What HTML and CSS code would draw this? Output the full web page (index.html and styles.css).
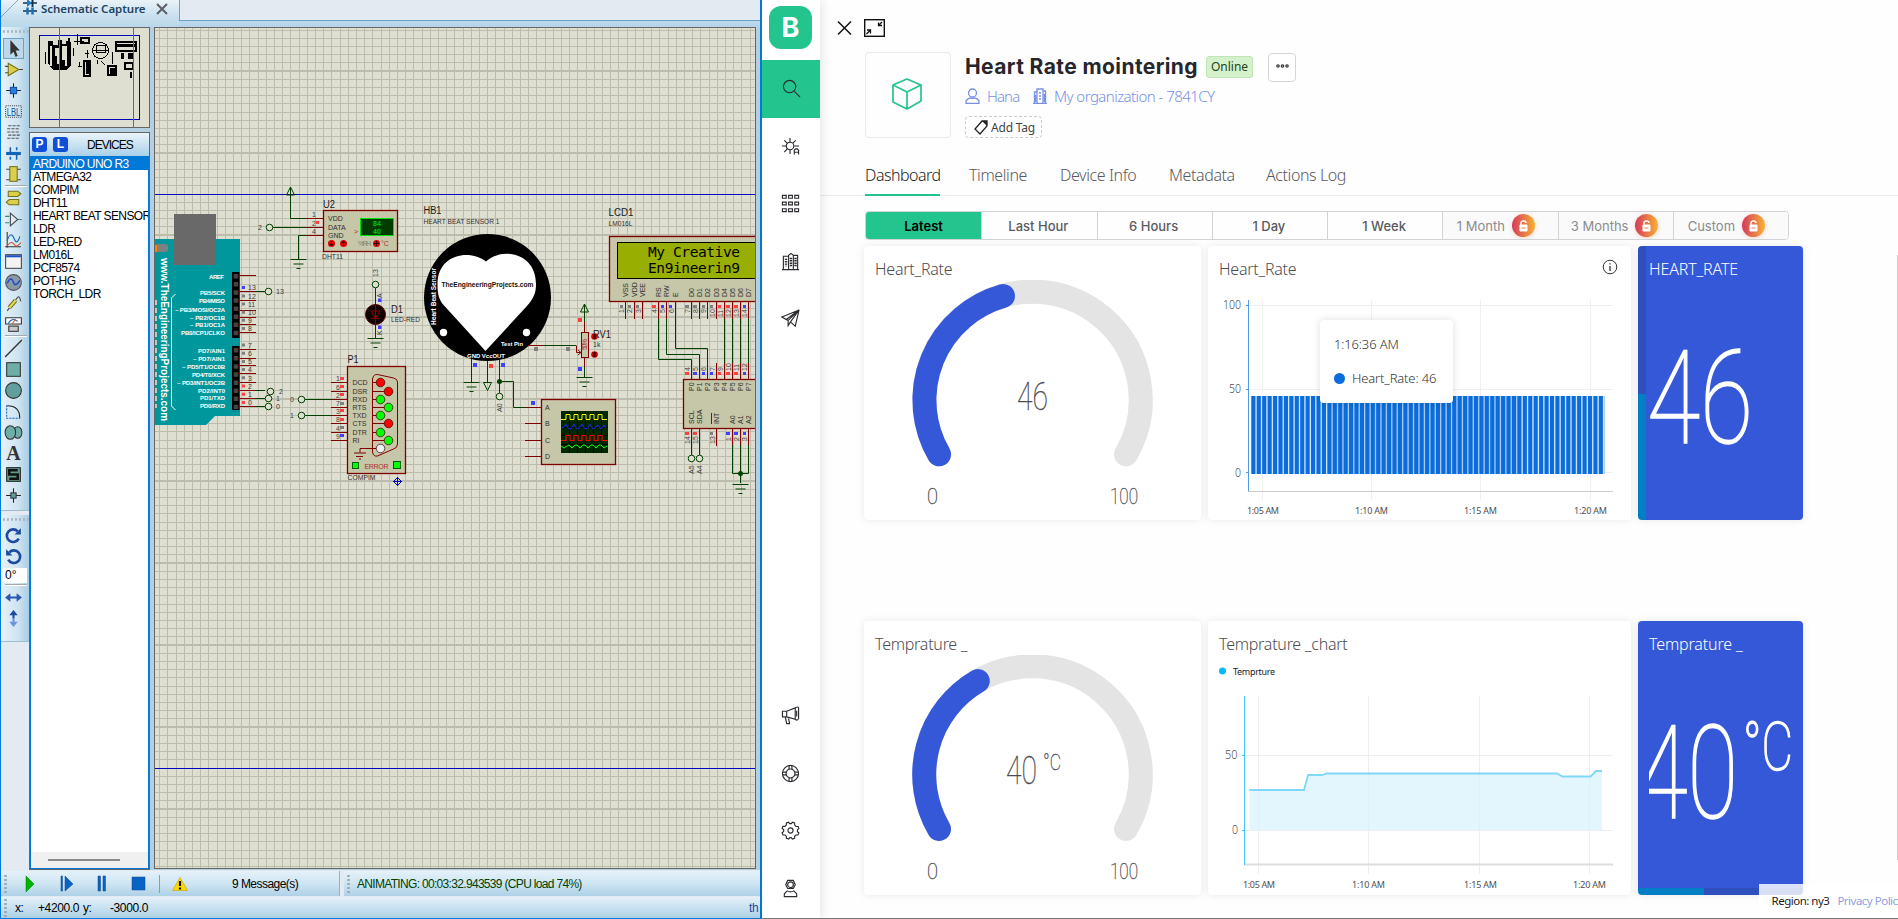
FILE: index.html
```html
<!DOCTYPE html>
<html lang="en">
<head>
<meta charset="utf-8">
<title>Schematic Capture and dashboard</title>
<link rel="stylesheet" href="styles.css">
</head>
<body>
<section class="capture">
  <header class="tabstrip">
    <div class="tab">
      <svg class="tab-slash" width="20" height="20"><path d="M0 19 19 0" stroke="#7aa7c4" fill="none"/></svg>
      <svg class="tab-icon" width="14" height="16" viewBox="0 0 14 16"><path d="M0 4h14M0 12h14" stroke="#12354f" stroke-width="1.400"/><path d="M4 0l5 4-5 4z" fill="#1c7fc4"/><path d="M9.500 0v8" stroke="#12354f" stroke-width="2"/><path d="M4.500 8.500v7M9.500 8.500v7" stroke="#1c6fb4" stroke-width="2.500"/></svg>
      <span class="tab-name">Schematic Capture</span>
      <svg width="12" height="12" viewBox="0 0 12 12"><path d="M1 1l10 10M11 1 1 11" stroke="#5b6066" stroke-width="2"/></svg>
    </div>
    <div class="tab-rest"></div>
  </header>
  <div class="workspace">
    <nav class="tools">
      <div class="tool-group">
        <i class="grip"></i>
        <b class="tool on"><svg viewBox="0 0 20 20"><path d="M7 2v14l3-3 2 5 2-1-2-5h4z" fill="#333"/></svg></b>
        <b class="tool"><svg viewBox="0 0 20 20"><path d="M2 7h4M2 13h4M14 10h5" stroke="#444"/><path d="M5 4l10 6-10 6z" fill="#d9cf4a" stroke="#77701c"/></svg></b>
        <b class="tool"><svg viewBox="0 0 20 20"><path d="M10 3v14M3 10h14" stroke="#222"/><rect x="7" y="7" width="6" height="6" fill="#2a7de0" stroke="#134e9a"/></svg></b>
        <b class="tool"><svg viewBox="0 0 20 20"><rect x="2.500" y="4.500" width="15" height="11" fill="none" stroke="#444" stroke-dasharray="1 1"/><text x="3.500" y="14" class="lbl" textLength="13" lengthAdjust="spacingAndGlyphs">LBL</text></svg></b>
        <b class="tool"><svg viewBox="0 0 20 20"><path d="M5 3.500h11M4 6.500h12M4 9.500h12M5 12.500h11M4 15.500h11" stroke="#555" stroke-dasharray="3 1"/></svg></b>
        <b class="tool"><svg viewBox="0 0 20 20"><path d="M3 10h14" stroke="#1263b8" stroke-width="3"/><path d="M7 4v6M13 10v6M7 13v3M13 4v3" stroke="#1263b8" stroke-width="1.500"/></svg></b>
        <b class="tool"><svg viewBox="0 0 20 20"><path d="M3 5h14M3 15h14" stroke="#444"/><rect x="6.500" y="2.500" width="7" height="14" fill="#d9cf4a" stroke="#77701c"/></svg></b>
        <i class="sep"></i>
        <b class="tool"><svg viewBox="0 0 20 20"><path d="M5 3h9l3 2.500-3 2.500H5zM15 11H6l-3 2.500 3 2.500h9z" fill="#d9cf4a" stroke="#77701c"/></svg></b>
        <b class="tool"><svg viewBox="0 0 20 20"><path d="M2 7h4M2 13h4M14 10h4" stroke="#2d8c86"/><path d="M7 4v12l7-6z" fill="#dfeaf1" stroke="#444"/></svg></b>
        <b class="tool"><svg viewBox="0 0 20 20"><path d="M4 2v15M2 16h15" stroke="#333"/><path d="M4 10c3-8 5-6 7-1s4 1 5-3" stroke="#1263b8" fill="none"/><path d="M4 15c3-4 5-4 7-1s4 0 6-2" stroke="#d4522a" fill="none"/></svg></b>
        <b class="tool"><svg viewBox="0 0 20 20"><rect x="2.500" y="3.500" width="15" height="13" fill="#f3f3f3" stroke="#444"/><path d="M3 5h14" stroke="#1c50c8" stroke-width="2"/></svg></b>
        <b class="tool"><svg viewBox="0 0 20 20"><circle cx="10" cy="10" r="7.500" fill="#8b98a8" stroke="#555"/><path d="M4 11c3-7 5-4 6-1s3 3 6-2" stroke="#1c50c8" stroke-width="1.500" fill="none"/></svg></b>
        <b class="tool"><svg viewBox="0 0 20 20"><path d="M4 17l3-4M12 7c3-6 4-3 5 1" stroke="#444" fill="none"/><path d="M6 14l6-7" stroke="#77701c" stroke-width="4"/><path d="M6 14l6-7" stroke="#e6dc52" stroke-width="2"/></svg></b>
        <b class="tool"><svg viewBox="0 0 20 20"><path d="M2.500 3.500h15v6h-15z" fill="#fff" stroke="#333"/><path d="M5 9c2-4 5-5 9-2" stroke="#1263b8" fill="none"/><path d="M9 9l3-4" stroke="#d4522a"/><rect x="5.500" y="11.500" width="9" height="5" fill="#c9c9c9" stroke="#333"/></svg></b>
        <i class="sep"></i>
        <b class="tool"><svg viewBox="0 0 20 20"><path d="M2 18 18 2" stroke="#333" stroke-width="1.300"/></svg></b>
        <b class="tool"><svg viewBox="0 0 20 20"><rect x="3.500" y="3.500" width="13" height="13" fill="#6fada9" stroke="#333"/></svg></b>
        <b class="tool"><svg viewBox="0 0 20 20"><circle cx="10" cy="10" r="7.500" fill="#5f9f9c" stroke="#333"/></svg></b>
        <b class="tool"><svg viewBox="0 0 20 20"><path d="M3.500 4v12.500H16" stroke="#1263b8" stroke-dasharray="2 1" fill="none"/><path d="M4 4.500c8 0 12 4 12 12" stroke="#222" fill="none"/></svg></b>
        <b class="tool"><svg viewBox="0 0 20 20"><ellipse cx="14" cy="10" rx="4" ry="5.500" fill="#6fada9" stroke="#333"/><ellipse cx="7" cy="10" rx="5" ry="6.500" fill="#6fada9" stroke="#333"/></svg></b>
        <b class="tool"><svg viewBox="0 0 20 20"><text x="3" y="16.500" class="glyph-a">A</text></svg></b>
        <b class="tool"><svg viewBox="0 0 20 20"><rect x="3.500" y="3.500" width="13" height="13" fill="#5f9f8c" stroke="#222"/><path d="M14 6H6v4h8v4H6" stroke="#111" stroke-width="2.400" fill="none"/></svg></b>
        <b class="tool"><svg viewBox="0 0 20 20"><path d="M10 3v14M3 10h14" stroke="#222"/><rect x="7.500" y="7.500" width="5" height="5" fill="#5f9f9c" stroke="#333"/></svg></b>
      </div>
      <div class="tool-group second">
        <i class="grip"></i>
        <b class="tool"><svg viewBox="0 0 20 20"><path d="M15 13a6 6 0 1 1-1-7" stroke="#1c4aa0" stroke-width="2.500" fill="none"/><path d="M17 3v6h-6z" fill="#1c4aa0"/></svg></b>
        <b class="tool"><svg viewBox="0 0 20 20"><path d="M5 13a6 6 0 1 0 1-7" stroke="#1c4aa0" stroke-width="2.500" fill="none"/><path d="M3 3v6h6z" fill="#1c4aa0"/></svg></b>
        <span class="angle">0°</span>
        <i class="sep"></i>
        <b class="tool"><svg viewBox="0 0 20 20"><path d="M2 10l5-4v3h6V6l5 4-5 4v-3H7v3z" fill="#2a56b0"/></svg></b>
        <b class="tool"><svg viewBox="0 0 20 20"><path d="M10 2l4 5h-3v3H9V7H6z" fill="#1c4aa0"/><path d="M10 18l4-5h-3v-3H9v3H6z" fill="#6d93da"/></svg></b>
      </div>
    </nav>
    <aside class="side">
      <div class="overview">
        <svg width="119" height="99" viewBox="30 28 119 99" shape-rendering="crispEdges">
          <rect x="39.500" y="35.500" width="100" height="84" fill="none" stroke="#0000b8"/>
          <path d="M48 41h5v4h5v-5h4v4h4v-6h4v4h1v23l-4 5H53l-5-7z" fill="#000"/>
          <path d="M50 46h2v20h-2zM55 48h4v16h-2v-8h-2zM62 46h5v20h-2v-6h-3zM64 38h4v3h-4z" fill="#dedfd0"/>
          <path d="M45 52v12M73 48v8M77 34v11M74 41h10M87 50v8M85 53h4M112 52v12M78 66h4M79 62v5" stroke="#000"/>
          <g fill="none" stroke="#000" stroke-width="2"><path d="M81 38h8v5h-8zM84 61h6v15h-6zM108 66h8v9h-8zM116 42h20v9h-20zM125 63h8v6h-8z"/></g>
          <path d="M86 61h4v13h-4zM110 68h6v6h-6zM121 53h3v6h4v-6h5v6h-12zM130 72h2v6h-2zM116 44h20v3h-20z" fill="#000"/>
          <circle cx="100.500" cy="50.500" r="8" fill="none" stroke="#000"/><path d="M92 50h17M96 45h9v7h-9zM97 60v4M101 61l4 4" stroke="#000" fill="none"/>
          <path d="M59.500 28v99M133.500 28v99" stroke="#00b400"/>
        </svg>
      </div>
      <div class="devices">
        <div class="devices-head"><b class="key">P</b><b class="key">L</b><span>DEVICES</span></div>
        <ul>
          <li class="picked">ARDUINO UNO R3</li><li>ATMEGA32</li><li>COMPIM</li><li>DHT11</li><li>HEART BEAT SENSOR</li><li>LDR</li><li>LED-RED</li><li>LM016L</li><li>PCF8574</li><li>POT-HG</li><li>TORCH_LDR</li>
        </ul>
        <div class="hscroll"><i></i></div>
      </div>
    </aside>
    <main class="sheet">
      <svg class="schematic" width="600" height="840" viewBox="155 28 600 840">
        <defs>
          <g id="gnd"><path d="M-8 0H8M-5 4.500H5M-2 9H2" stroke="#004000"/></g>
          <g id="pwr"><path d="M0 0v8" stroke="#004000"/><path d="M-4 8 0 0 4 8z" fill="none" stroke="#004000"/></g>
          <circle id="term" r="3.300" fill="#dedfd0" stroke="#004000"/>
        </defs>
        <g shape-rendering="crispEdges" stroke="#bcbcac" fill="none">
          <path d="M159.200 448H755" stroke-width="840" stroke-dasharray="1 7.200"/>
          <path d="M455 29.700V868" stroke-width="600" stroke-dasharray="1 7.200"/>
          <path d="M232.600 448H755" stroke-width="840" stroke-dasharray="1.600 80.400"/>
          <path d="M455 70V868" stroke-width="600" stroke-dasharray="2 80"/>
        </g>
        <path d="M155 194.500H755M155 768.500H755" stroke="#0000c0"/>

        <g class="board">
          <path d="M155 239h85v177h-25l-9 9h-51z" fill="#00979c"/>
          <path d="M155 300V408" stroke="#c4c4c4" stroke-width="4" stroke-dasharray="5 3"/>
          <rect x="174" y="214" width="42" height="51" fill="#696969"/>
          <rect x="155" y="244" width="13" height="8" rx="3" fill="#808080"/><rect x="155" y="245" width="2" height="7" fill="#ff8000"/>
          <text class="vert-name" transform="translate(160.500 258) rotate(90)" textLength="163" lengthAdjust="spacingAndGlyphs">www.TheEngineeringProjects.com</text>
          <path d="M175.500 294l-4 4v108l4 4" fill="none" stroke="#fff"/>
          <path d="M232 272h7.500v66H232zM232 346h7.500v64H232z" fill="#000"/>
          <path d="M236 274v63M236 348v61" stroke="#444" stroke-width="4.500" stroke-dasharray="4.500 3.600"/>
          <g class="silk">
            <text x="224" y="279" textLength="15">AREF</text><text x="225" y="295" textLength="25">PB5/SCK</text><text x="225" y="303" textLength="26">PB4/MISO</text><text x="225" y="312" textLength="50">~ PB3/MOSI/OC2A</text><text x="225" y="320" textLength="35">~ PB2/OC1B</text><text x="225" y="327" textLength="35">~ PB1/OC1A</text><text x="225" y="335" textLength="44">PB0/ICP1/CLKO</text>
            <text x="225" y="353" textLength="27">PD7/AIN1</text><text x="225" y="361" textLength="32">~ PD7/AIN1</text><text x="225" y="369" textLength="43">~ PD5/T1/OC0B</text><text x="225" y="377" textLength="33">PD4/T0/XCK</text><text x="225" y="385" textLength="48">~ PD3/INT1/OC2B</text><text x="225" y="393" textLength="27">PD2/INT0</text><text x="225" y="400" textLength="25">PD1/TXD</text><text x="225" y="408" textLength="25">PD0/RXD</text>
          </g>
          <path d="M237 275.500h19M237 291.500h19M237 300.500h19M237 310.500h19M237 317.500h19M237 324.500h19M237 332.500h19M237 349.500h19M237 358.500h19M237 365.500h19M237 373.500h19M237 382.500h19M237 390.500h19M237 398.500h19M237 406.500h19" stroke="#800000"/>
          <path d="M256 291.500h9M256 390.500h9M256 398.500h9M256 406.500h9" stroke="#004000"/>
          <use href="#term" x="268.500" y="291.500"/><use href="#term" x="270.500" y="391.500"/><use href="#term" x="268.500" y="398.500"/><use href="#term" x="268.500" y="406.500"/>
          <g class="pin"><text x="248" y="290">13</text><text x="248" y="299">12</text><text x="248" y="307">11</text><text x="248" y="315">10</text><text x="248" y="323">9</text><text x="248" y="331">8</text><text x="248" y="348">7</text><text x="248" y="356">6</text><text x="248" y="364">5</text><text x="248" y="372">4</text><text x="248" y="381">3</text><text x="248" y="389">2</text><text x="248" y="397">1</text><text x="248" y="405">0</text><text x="276" y="294">13</text><text x="279" y="394">2</text><text x="276" y="401">1</text><text x="276" y="409">0</text></g>
          <path d="M243.500 294.500v40" stroke="#808080" stroke-width="3" stroke-dasharray="3 5.100"/><path d="M243.500 343.500v36" stroke="#808080" stroke-width="3" stroke-dasharray="3 5.200"/>
          <path d="M243.500 384.500v20" stroke="#ff4040" stroke-width="3" stroke-dasharray="3 5.200"/><path d="M242 286h3v3h-3z" fill="#4040ff"/>
        </g>

        <g class="dht">
          <use href="#pwr" x="290.500" y="187"/><path d="M290.500 194v24.500H306M273 227.500h33M298.500 259v-23.500H306" fill="none" stroke="#004000"/>
          <path d="M306 218.500h17M306 227.500h17M306 235.500h17" stroke="#800000"/><use href="#gnd" x="298.500" y="259.500"/><use href="#term" x="269.500" y="227.500"/>
          <rect x="323.500" y="210.500" width="74" height="41" fill="#c6c6a8" stroke="#800000" stroke-width="1.300"/>
          <rect x="360.500" y="218.500" width="33" height="17" fill="#003c00" stroke="#00e600"/>
          <text x="373" y="226" class="led">84</text><text x="373" y="234" class="led">40</text>
          <g class="pin"><text x="258" y="230">2</text><text x="312" y="217">1</text><text x="312" y="226">2</text><text x="312" y="234">4</text></g><path d="M316 221h3v3h-3z" fill="#ff4040"/>
          <g class="part"><text x="328" y="221">VDD</text><text x="328" y="230">DATA</text><text x="328" y="238">GND</text></g>
          <g fill="#e00000"><circle cx="331.500" cy="243.500" r="3.500"/><circle cx="343.500" cy="243.500" r="3.500"/><circle cx="376.500" cy="243.500" r="3.500"/></g><path d="M331.500 241v5M343.500 241v5M374 243.500h5M376.500 241v5M330 244l1.500 2 1.500-2M342 243l1.500-2 1.500 2" stroke="#300" fill="none"/>
          <text x="358" y="246" class="part dim" textLength="13">%RH</text><text x="381" y="246" class="part red">°C</text><text x="354" y="234" class="part red">&gt;</text>
          <text x="323" y="208" class="ref" textLength="12" lengthAdjust="spacingAndGlyphs">U2</text><text x="322" y="259" class="val" textLength="21" lengthAdjust="spacingAndGlyphs">DHT11</text>
        </g>

        <g class="diode">
          <path d="M375.500 288v10M375.500 330v9" stroke="#004000"/><path d="M375.500 298v32" stroke="#800000"/><use href="#term" x="375.500" y="284.500"/><use href="#gnd" x="375.500" y="338.500"/>
          <circle cx="375.500" cy="314.500" r="10" fill="#100000" stroke="#500000"/><path d="M371 311h9l-4.500 7zM371 318.500h9M375.500 305v19" fill="none" stroke="#900000"/>
          <text class="pin" transform="translate(378 277) rotate(-90)">13</text><text class="pin" transform="translate(382 298) rotate(-90)">A</text><text class="pin" transform="translate(382 335) rotate(-90)">K</text>
          <path d="M378 298.500h3.500v3.500H378zM378 325.500h3.500v3.500H378z" fill="#4040ff"/>
          <text x="391" y="313" class="ref" textLength="12" lengthAdjust="spacingAndGlyphs">D1</text><text x="391" y="322" class="val" textLength="29" lengthAdjust="spacingAndGlyphs">LED-RED</text>
        </g>

        <g class="compim">
          <path d="M305 399.500h27M305 415.500h27" stroke="#004000"/><use href="#term" x="301.500" y="399.500"/><use href="#term" x="301.500" y="415.500"/>
          <path d="M331 382.500h17M331 391.500h17M331 399.500h17M331 407.500h17M331 415.500h17M331 423.500h17M331 432.500h17M331 440.500h17" stroke="#800000"/>
          <rect x="347.500" y="366.500" width="58" height="107" fill="#c6c6a8" stroke="#800000" stroke-width="1.300"/>
          <path d="M372.500 379q1-5 5-4.500l16 3.500q4 1 4 4v62q0 4-4 5l-16 7q-4 1-5-4zM372.500 382.500h6M372.500 391.500h14M372.500 399.500h6M372.500 407.500h14M372.500 415.500h6M372.500 423.500h14M372.500 432.500h6M372.500 440.500h14M378 448.500h-18v4M354 453h12M356 456.500h7M359 459h2" fill="none" stroke="#800000"/>
          <g stroke="#300" stroke-width=".7"><g fill="#f00"><circle cx="380.500" cy="382.500" r="4.300"/><circle cx="388.500" cy="391.500" r="4.300"/><circle cx="388.500" cy="423.500" r="4.300"/></g><g fill="#0f0"><circle cx="380.500" cy="399.500" r="4.300"/><circle cx="388.500" cy="407.500" r="4.300"/><circle cx="380.500" cy="415.500" r="4.300"/><circle cx="380.500" cy="432.500" r="4.300"/><circle cx="388.500" cy="440.500" r="4.300"/></g><circle cx="380.500" cy="448.500" r="4.300" fill="#eee"/></g>
          <g class="part"><text x="352.500" y="385">DCD</text><text x="352.500" y="394">DSR</text><text x="352.500" y="402">RXD</text><text x="352.500" y="410">RTS</text><text x="352.500" y="418">TXD</text><text x="352.500" y="426">CTS</text><text x="352.500" y="435">DTR</text><text x="352.500" y="443">RI</text></g>
          <g class="pin"><text x="336" y="381">1</text><text x="336" y="390">6</text><text x="336" y="398">2</text><text x="336" y="406">7</text><text x="336" y="414">3</text><text x="336" y="422">8</text><text x="336" y="431">4</text><text x="336" y="439">9</text><text x="290" y="402">0</text><text x="290" y="418">1</text></g>
          <path d="M340 377h4v3h-4zM340 385h4v3h-4zM340 393h4v3h-4zM340 409h4v3h-4zM340 418h4v3h-4z" fill="#ff4040"/><path d="M340 402h4v3h-4zM340 426h4v3h-4z" fill="#808080"/><path d="M340 434h4v3h-4z" fill="#4040ff"/>
          <g fill="#0f0" stroke="#006000"><rect x="352.500" y="462.500" width="6" height="6"/><rect x="393.500" y="461.500" width="7" height="7"/></g>
          <text x="364.500" y="469" class="part red" textLength="24">ERROR</text>
          <text x="347.500" y="363" class="ref" textLength="11" lengthAdjust="spacingAndGlyphs">P1</text><text x="347.500" y="480" class="val" textLength="28" lengthAdjust="spacingAndGlyphs">COMPIM</text>
          <path d="M397.500 477v9M393 481.500h9M397.500 477.500l4 4-4 4-4-4z" fill="none" stroke="#0000c0"/>
        </g>

        <g class="heart">
          <path d="M471.500 360v22M487.500 360v22M499.500 360v33M499.500 381.500h14v26H525" fill="none" stroke="#004000"/><path d="M471.500 358v15M487.500 358v15M499.500 358v15M525 407.500h16M525 423.500h16M525 440.500h16M525 456.500h16" stroke="#800000"/>
          <use href="#gnd" x="471.500" y="382.500"/><path d="M483.500 382.500h8l-4 8z" fill="none" stroke="#004000"/><circle cx="499.500" cy="381.500" r="2.500" fill="#004000"/><use href="#term" x="499.500" y="396.500"/>
          <circle cx="487.500" cy="297.500" r="63.500" fill="#000"/>
          <path d="M486 261.500C471 249 437 253 437.500 285c0 8 1 15 7 21L485.500 351l41-44.500c7-8 9.500-13 9.500-22.500C536 252 501 247 486 261.500z" fill="#fff"/>
          <circle cx="443.500" cy="332.500" r="3.700" fill="#fff"/><circle cx="526.500" cy="332.500" r="3.700" fill="#fff"/>
          <text x="441.500" y="286.500" class="site" textLength="92" lengthAdjust="spacingAndGlyphs">TheEngineeringProjects.com</text>
          <text class="white-lbl" transform="translate(436 325) rotate(-90)" textLength="57" lengthAdjust="spacingAndGlyphs">Heart Beat Sensor</text>
          <text x="501" y="346" class="white-lbl sm" textLength="22" lengthAdjust="spacingAndGlyphs">Test Pin</text><text x="467" y="358" class="white-lbl sm" textLength="38" lengthAdjust="spacingAndGlyphs">GND VccOUT</text>
          <path d="M473 363h4v4h-4zM501 363h4v4h-4zM531 401h4v4h-4zM578 367h4v4h-4z" fill="#4040ff"/><path d="M489 364h4v4h-4zM578 318h4v4h-4z" fill="#ff4040"/><path d="M534 347h4v4h-4zM566 347h4v4h-4z" fill="#808080"/>
          <text class="pin" transform="translate(502 412) rotate(-90)">A0</text>
          <text x="423.500" y="214" class="ref" textLength="18" lengthAdjust="spacingAndGlyphs">HB1</text><text x="423.500" y="224" class="val" textLength="76" lengthAdjust="spacingAndGlyphs">HEART BEAT SENSOR 1</text>
        </g>

        <g class="pot">
          <path d="M528 345.500h16M576.500 345.500v7h4M584.500 321v12M584.500 357v10" fill="none" stroke="#800000"/><path d="M544 345.500h32M584.500 310v12M584.500 367v10" stroke="#004000"/>
          <use href="#pwr" x="584.500" y="304"/><use href="#gnd" x="584.500" y="377.500"/>
          <rect x="581.500" y="332.500" width="7" height="25" fill="#c6c6a8" stroke="#800000"/><text class="part red" transform="translate(587 350) rotate(-90)" textLength="11">50%</text>
          <path d="M578 350l3 2.500-3 2.500" fill="none" stroke="#800000"/><text x="593" y="338" class="ref" textLength="18" lengthAdjust="spacingAndGlyphs">RV1</text><text x="593" y="347" class="val">1k</text>
          <circle cx="594.500" cy="336.500" r="3.300" fill="#d00000"/><circle cx="594.500" cy="354.500" r="3.300" fill="#d00000"/><path d="M594.500 334v5M594.500 352v5" stroke="#300" stroke-width="2"/>
        </g>

        <g class="scope">
          <rect x="541.500" y="399.500" width="74" height="65" fill="#c6c6a8" stroke="#800000" stroke-width="1.300"/>
          <rect x="561" y="411" width="47" height="42" fill="#002800"/>
          <path d="M569.500 411v42M577.500 411v42M585.500 411v42M593.500 411v42M601.500 411v42M561 419.500h47M561 427.500h47M561 435.500h47M561 444.500h47" stroke="#000"/>
          <path d="M561 419.500h5v-5h4v5h4v-5h4v5h4v-5h4v5h4v-5h4v5h4v-5h4v5h5" fill="none" stroke="#ff0"/>
          <path d="M561 440.500h5v-5h4v5h4v-5h4v5h4v-5h4v5h4v-5h4v5h4v-5h4v5h5" fill="none" stroke="#f00" stroke-width="1.200"/>
          <path d="M561 428l3-1 2-3 2 4 3 1 3-5 3 5 3-2 2-3 3 5 3-1 2-4 3 5 3-2 2-2 3 4 3-4 2 3" fill="none" stroke="#22f"/>
          <path d="M561 446l3 2 3-2 2-1 3 3 3-3 2 0 3 3 3-3 2 0 3 3 3-3 2 0 3 3 3-3 2 0 3 3 3-2" fill="none" stroke="#0f0"/>
          <g class="part"><text x="545" y="410">A</text><text x="545" y="426">B</text><text x="545" y="443">C</text><text x="545" y="459">D</text></g>
        </g>

        <g class="lcd">
          <rect x="609.500" y="236.500" width="160" height="65" fill="#c6c6a8" stroke="#800000" stroke-width="1.300"/>
          <rect x="617.500" y="242.500" width="150" height="36" fill="#98ae00" stroke="#000"/>
          <text x="648" y="256.500" class="lcd-text" textLength="92">My Creative</text><text x="648" y="272.500" class="lcd-text" textLength="92">En9ineerin9</text>
          <path d="M625.500 302v17M634.500 302v17M642.500 302v17M658.500 302v17M666.500 302v17M675.500 302v17M691.500 302v17M699.500 302v17M707.500 302v17M716.500 302v17M724.500 302v17M732.500 302v17M740.500 302v17M748.500 302v17" stroke="#800000"/>
          <path d="M658.500 319v40.500h33V364M666.500 319v35.500h33V364M675.500 319v29.500h32V364M724.500 319v46M732.500 319v46M740.500 319v46M748.500 319v46" fill="none" stroke="#004000"/>
          <g class="part"><text transform="translate(628 297) rotate(-90)">VSS</text><text transform="translate(637 297) rotate(-90)">VDD</text><text transform="translate(645 297) rotate(-90)">VEE</text><text transform="translate(661 297) rotate(-90)">RS</text><text transform="translate(669 297) rotate(-90)">RW</text><text transform="translate(678 297) rotate(-90)">E</text><text transform="translate(694 297) rotate(-90)">D0</text><text transform="translate(702 297) rotate(-90)">D1</text><text transform="translate(710 297) rotate(-90)">D2</text><text transform="translate(719 297) rotate(-90)">D3</text><text transform="translate(727 297) rotate(-90)">D4</text><text transform="translate(735 297) rotate(-90)">D5</text><text transform="translate(743 297) rotate(-90)">D6</text><text transform="translate(751 297) rotate(-90)">D7</text></g>
          <g class="pin"><text transform="translate(624 313) rotate(-90)">1</text><text transform="translate(632 313) rotate(-90)">2</text><text transform="translate(641 313) rotate(-90)">3</text><text transform="translate(657 313) rotate(-90)">4</text><text transform="translate(665 313) rotate(-90)">5</text><text transform="translate(674 313) rotate(-90)">6</text><text transform="translate(690 313) rotate(-90)">7</text><text transform="translate(698 313) rotate(-90)">8</text><text transform="translate(706 313) rotate(-90)">9</text><text transform="translate(715 317) rotate(-90)">10</text><text transform="translate(723 317) rotate(-90)">11</text><text transform="translate(731 317) rotate(-90)">12</text><text transform="translate(739 317) rotate(-90)">13</text><text transform="translate(747 317) rotate(-90)">14</text></g>
          <path d="M620 305h3v3h-3zM628 305h3v3h-3zM636 305h3v3h-3zM685 305h4v3h-4zM693 305h4v3h-4zM702 305h3v3h-3zM710 305h3v3h-3z" fill="#808080"/><path d="M652 305h4v3h-4zM718 305h3v3h-3zM726 305h4v3h-4zM734 305h4v3h-4z" fill="#ff4040"/><path d="M661 305h3v3h-3zM669 305h3v3h-3zM743 305h3v3h-3z" fill="#4040ff"/>
          <text x="608.500" y="216" class="ref" textLength="25" lengthAdjust="spacingAndGlyphs">LCD1</text><text x="608.500" y="226" class="val" textLength="24" lengthAdjust="spacingAndGlyphs">LM016L</text>
        </g>

        <g class="expander">
          <path d="M691.500 363v16M699.500 363v16M707.500 363v16M716.500 363v16M724.500 363v16M732.500 363v16M740.500 363v16M748.500 363v16M691.500 429v16M699.500 429v16M716.500 429v17M732.500 429v16M740.500 429v16M748.500 429v16" stroke="#800000"/>
          <rect x="683.500" y="379.500" width="90" height="49" fill="#c6c6a8" stroke="#800000" stroke-width="1.300"/>
          <path d="M691.500 445v10M699.500 445v10M732.500 445v28.500h16V445M740.500 445v38" fill="none" stroke="#004000"/><circle cx="740.500" cy="473.500" r="2.500" fill="#004000"/><use href="#gnd" x="740.500" y="484.500"/><use href="#term" x="691.500" y="458.500"/><use href="#term" x="699.500" y="458.500"/>
          <g class="part"><text transform="translate(694 391) rotate(-90)">P0</text><text transform="translate(702 391) rotate(-90)">P1</text><text transform="translate(710 391) rotate(-90)">P2</text><text transform="translate(719 391) rotate(-90)">P3</text><text transform="translate(727 391) rotate(-90)">P4</text><text transform="translate(735 391) rotate(-90)">P5</text><text transform="translate(743 391) rotate(-90)">P6</text><text transform="translate(751 391) rotate(-90)">P7</text><text transform="translate(694 424) rotate(-90)">SCL</text><text transform="translate(702 424) rotate(-90)">SDA</text><text transform="translate(719 424) rotate(-90)">INT</text><text transform="translate(735 424) rotate(-90)">A0</text><text transform="translate(743 424) rotate(-90)">A1</text><text transform="translate(751 424) rotate(-90)">A2</text></g><path d="M711.500 413v11" stroke="#333"/>
          <g class="pin"><text transform="translate(690 371) rotate(-90)">4</text><text transform="translate(698 371) rotate(-90)">5</text><text transform="translate(706 371) rotate(-90)">6</text><text transform="translate(715 371) rotate(-90)">7</text><text transform="translate(723 371) rotate(-90)">9</text><text transform="translate(731 371) rotate(-90)">10</text><text transform="translate(739 371) rotate(-90)">11</text><text transform="translate(747 371) rotate(-90)">12</text><text transform="translate(690 444) rotate(-90)">14</text><text transform="translate(698 444) rotate(-90)">15</text><text transform="translate(715 444) rotate(-90)">13</text><text transform="translate(731 441) rotate(-90)">1</text><text transform="translate(739 441) rotate(-90)">2</text><text transform="translate(747 441) rotate(-90)">3</text><text transform="translate(694 474) rotate(-90)">A5</text><text transform="translate(702 474) rotate(-90)">A4</text></g>
          <path d="M685 372h4v3h-4zM718 372h3v3h-3zM726 372h4v3h-4zM734 372h4v3h-4zM685 432h4v3h-4zM693 432h4v3h-4z" fill="#ff4040"/><path d="M693 372h4v3h-4zM702 372h3v3h-3zM710 372h3v3h-3zM743 372h3v3h-3zM726 432h4v3h-4zM734 432h4v3h-4zM743 432h3v3h-3z" fill="#4040ff"/><path d="M710 432h3v3h-3z" fill="#808080"/>
        </g>
      </svg>
    </main>
  </div>
  <div class="simbar">
    <div class="controls"><i class="vgrip"></i>
      <svg width="150" height="20" viewBox="20 874 150 20"><path d="M26 876l8 8-8 8z" fill="#00b400" stroke="#008000" stroke-width=".5"/><g fill="#0a62c4" stroke="#084a96" stroke-width=".5"><path d="M61 876h1.500v15H61zM65 876l8 8-8 7zM98 876h2.500v15H98zM103 876h2.500v15H103zM132 877h13v13h-13z"/></g><path d="M159.500 875v18" stroke="#999"/></svg>
      <svg width="16" height="14" viewBox="0 0 16 14"><path d="M8 .5 15.500 13.500H.5z" fill="#ffd800" stroke="#c9a000" stroke-width=".6"/><path d="M8 4v5M8 10.500v2" stroke="#111" stroke-width="2.200"/></svg>
      <span class="messages">9 Message(s)</span>
    </div>
    <div class="anim"><i class="vgrip"></i><span>ANIMATING: 00:03:32.943539 (CPU load 74%)</span></div>
  </div>
  <footer class="coords"><i class="vgrip"></i><span class="cx">x:</span><span class="cv">+4200.0</span><span class="cy">y:</span><span class="cv2">-3000.0</span><span class="unit">th</span></footer>
</section>

<section class="dash">
  <nav class="rail">
    <div class="logo">B</div>
    <a class="rail-item active"><svg viewBox="0 0 20 20"><circle cx="8" cy="8" r="6.500"/><path d="M13 13l6 6"/></svg></a>
    <a class="rail-item"><svg viewBox="0 0 20 20"><circle cx="9.500" cy="9.500" r="4"/><path d="M9.500 1v4.500M1 9.500h4.500M14 9.500h5M3.500 3.500l3 3M15.500 3.500l-3 3M3.500 16l3-3.500M9.500 14v4M14 18.500v-4.500l1.500-1.500h1.500l1.500 1.500v4.500M14 16h4.500"/></svg></a>
    <a class="rail-item"><svg viewBox="0 0 20 20"><path d="M1.500 1.500h4v3h-4zM8 1.500h4v3H8zM14.500 1.500h4v3h-4zM1.500 8.500h4v3h-4zM8 8.500h4v3H8zM14.500 8.500h4v3h-4zM1.500 15.500h4v3h-4zM8 15.500h4v3H8zM14.500 15.500h4v3h-4z"/></svg></a>
    <a class="rail-item"><svg viewBox="0 0 20 20"><path d="M1 18.500h18M2.500 18V4.500H8M8 18V3.500L10.500 1.500 13 3.500V18M13 3.500h4.500V18"/><path d="M5.300 7v8M10.500 6v9M15.300 6v9" stroke-width="2.500" stroke-dasharray="1.500 1"/></svg></a>
    <a class="rail-item"><svg viewBox="0 0 20 20"><path d="M19 1 1 8.500l4.500 2.500L19 1 7.500 12v5.500l2.500-4L19 1l-4 17-5-4.500M5.500 11l2 1"/></svg></a>
    <span class="rail-gap"></span>
    <a class="rail-item"><svg viewBox="0 0 20 20"><path d="M1.500 5.500H6l9-3.500v12l-9-2.500H1.500zM6 5.500v6M4.500 11.500l1.500 7h3l-1-5.500M15 2q3-2 3.500 0v11q-1 3-3.500 1M16.500 5v6"/></svg></a>
    <a class="rail-item"><svg viewBox="0 0 20 20"><circle cx="10" cy="10" r="8.500"/><circle cx="10" cy="10" r="4.700"/><path d="M8.500 1.500v4M11.500 1.500v4M8.500 14.500v4M11.500 14.500v4M1.500 8.500h4M1.500 11.500h4M14.500 8.500h4M14.500 11.500h4"/></svg></a>
    <a class="rail-item"><svg viewBox="0 0 20 20"><circle cx="10" cy="10" r="2.700"/><path d="M8 1.200l1 1.600h2l1-1.600 2.300.9.100 2.200 1.400 1.400 2.200.1.800 2.200-1.500 1.300v1.900l1.500 1.200-.9 2.200-2.100.1-1.400 1.400-.1 2.200-2.300.8-1.300-1.600H9.300l-1.300 1.600-2.300-.8-.1-2.200-1.400-1.400-2.200-.1-.8-2.200 1.600-1.300V9L1.200 7.900 2 5.700l2.200-.1 1.400-1.400.1-2.200z"/></svg></a>
    <a class="rail-item"><svg viewBox="0 0 20 20"><circle cx="10" cy="6" r="3"/><path d="M7 1.500h6L15 6l-2 4H7L5 6zM3.500 18.500v-3l3-3q3.500 2 7 0l3 3v3z"/></svg></a>
  </nav>
  <main class="page">
    <div class="page-tools">
      <svg width="15" height="16" viewBox="0 0 15 16"><path d="M1 1.500l13 13M14 1.500l-13 13" stroke="#111" stroke-width="1.500"/></svg>
      <svg width="21" height="18" viewBox="0 0 21 18"><rect x=".7" y=".7" width="19.600" height="16.600" fill="none" stroke="#111" stroke-width="1.400"/><path d="M18 3l-3 3M14.500 3.500v3H18M2.500 15l3.500-3.500M3 11h3.500v3.500" fill="none" stroke="#111" stroke-width="1.300"/></svg>
    </div>
    <header class="device">
      <div class="thumb"><svg width="30" height="32" viewBox="0 0 30 32"><path d="M15 1 29 7v16L15 31 1 24V7zM1 7l14 7 14-7M15 14v17" fill="none" stroke="#23c48e" stroke-width="1.700" stroke-linejoin="round"/></svg></div>
      <div class="device-info">
        <div class="name-row"><h1>Heart Rate mointering</h1><span class="online">Online</span><button class="more"><svg width="13" height="4" viewBox="0 0 13 4"><g fill="none" stroke="#333" stroke-width="1.200"><circle cx="2" cy="2" r="1.200"/><circle cx="6.500" cy="2" r="1.200"/><circle cx="11" cy="2" r="1.200"/></g></svg></button></div>
        <div class="owner-row">
          <svg width="15" height="16" viewBox="0 0 15 16"><circle cx="7.500" cy="5" r="4"/><path d="M1 15.300v-2.500q1.500-2.500 4.500-3 2 1 4 0 3 .5 4.500 3v2.500z"/></svg><span class="owner">Hana</span>
          <svg class="org-icon" width="14" height="16" viewBox="0 0 14 16"><path d="M0 15.300h14M1.500 15V4H4M4 15V1h6v14M10 3h2.500v12M6 5h2M6 8h2M6 11h2M2.500 7v7M11.500 6v8"/></svg><span class="org">My organization - 7841CY</span>
        </div>
        <button class="add-tag"><svg width="14" height="15" viewBox="0 0 14 15"><path d="M8 1h5v5l-7 8-5-5z" fill="none" stroke="#222" stroke-width="1.300"/><path d="M8 1h5v5z" fill="#222"/></svg><span>Add Tag</span></button>
      </div>
    </header>
    <nav class="tabs"><a class="current t1">Dashboard</a><a class="t2">Timeline</a><a class="t3">Device Info</a><a class="t4">Metadata</a><a class="t5">Actions Log</a></nav>
    <div class="ranges">
      <span class="live">Latest</span><span>Last Hour</span><span>6 Hours</span><span>1 Day</span><span>1 Week</span>
      <span class="locked shift">1 Month<i><svg width="9" height="12" viewBox="0 0 9 12"><path d="M2 5V3q0-2 2.500-2T7 3" fill="none" stroke="#fff" stroke-width="1.400"/><path d="M1 5h7v6H1z" fill="#fff" stroke="#fff"/><path d="M2.500 8h4" stroke="#e67d4a"/></svg></i></span>
      <span class="locked">3 Months<i><svg width="9" height="12" viewBox="0 0 9 12"><path d="M2 5V3q0-2 2.500-2T7 3" fill="none" stroke="#fff" stroke-width="1.400"/><path d="M1 5h7v6H1z" fill="#fff" stroke="#fff"/><path d="M2.500 8h4" stroke="#e67d4a"/></svg></i></span>
      <span class="locked shift">Custom<i><svg width="9" height="12" viewBox="0 0 9 12"><path d="M2 5V3q0-2 2.500-2T7 3" fill="none" stroke="#fff" stroke-width="1.400"/><path d="M1 5h7v6H1z" fill="#fff" stroke="#fff"/><path d="M2.500 8h4" stroke="#e67d4a"/></svg></i></span>
    </div>
    <div class="grid">
      <article class="card">
        <h2><span>Heart_Rate</span></h2>
        <svg width="337" height="240" viewBox="864 281 337 240">
          <g fill="none" stroke-width="24" stroke-linecap="round"><path d="M939 455.300A108.200 108.200 0 1 1 1126 455.300" stroke="#e4e4e4"/><path d="M939 455.300A108.200 108.200 0 0 1 1003 297" stroke="#3558d8"/></g>
          <g class="num"><text x="1017" y="411" font-size="39" textLength="31" lengthAdjust="spacingAndGlyphs">46</text><text x="927" y="505" font-size="22.500" textLength="11" lengthAdjust="spacingAndGlyphs">0</text><text x="1110" y="505" font-size="22.500" textLength="28" lengthAdjust="spacingAndGlyphs">100</text></g>
        </svg>
      </article>
      <article class="card">
        <h2><span>Heart_Rate</span><svg width="16" height="16" viewBox="0 0 16 16"><circle cx="8" cy="8" r="6.800" fill="none" stroke="#333"/><path d="M8 4.300v1.200M8 7v5" stroke="#333" stroke-width="1.300"/></svg></h2>
        <svg width="423" height="240" viewBox="1208 281 423 240">
          <path d="M1248 306.500h365M1248 390.500h365M1248 473.500h365M1262.500 301v200M1371.500 301v200M1480.500 301v200M1590.500 301v200" stroke="#f0f0f0"/>
          <path d="M1248 492.500h365" stroke="#ccc"/><path d="M1251.300 436H1604.500" stroke="#d3e5f8" stroke-width="78"/><path d="M1330 436h190" stroke="#a9c9ee" stroke-width="78"/><path d="M1251.300 436H1604.500" stroke="#0a6ddb" stroke-width="78" stroke-dasharray="4.100 1.330"/>
          <path d="M1248.500 301v191M1246 306.500h2M1246 390.500h2M1246 473.500h2" stroke="#4e9be6"/>
          <g class="axis"><text x="1223" y="310" textLength="18" lengthAdjust="spacingAndGlyphs">100</text><text x="1229" y="394" textLength="12" lengthAdjust="spacingAndGlyphs">50</text><text x="1235" y="478" textLength="6" lengthAdjust="spacingAndGlyphs">0</text></g>
          <g class="tick"><text x="1247" y="514.500" textLength="32">1:05 AM</text><text x="1355" y="514.500" textLength="33">1:10 AM</text><text x="1464" y="514.500" textLength="33">1:15 AM</text><text x="1574" y="514.500" textLength="33">1:20 AM</text></g>
        </svg>
        <div class="tip"><span>1:16:36 AM</span><span class="tip-row"><i></i>Heart_Rate: 46</span></div>
      </article>
      <article class="card solid level-v">
        <h2><span>HEART_RATE</span></h2>
        <svg width="166" height="240" viewBox="1638 281 166 240"><g class="num white"><text x="1647" y="443.500" font-size="129" textLength="106" lengthAdjust="spacingAndGlyphs">46</text></g></svg>
      </article>
      <article class="card">
        <h2><span>Temprature _</span></h2>
        <svg width="337" height="240" viewBox="864 656 337 240">
          <g fill="none" stroke-width="24" stroke-linecap="round"><path d="M939 830A108.200 108.200 0 1 1 1126 830" stroke="#e4e4e4"/><path d="M939 830A108.200 108.200 0 0 1 977.800 682" stroke="#3558d8"/></g>
          <g class="num"><text x="1006" y="785" font-size="39" textLength="31" lengthAdjust="spacingAndGlyphs">40</text><text x="1043" y="771" font-size="22.500" textLength="18" lengthAdjust="spacingAndGlyphs">°C</text><text x="927" y="880" font-size="22.500" textLength="11" lengthAdjust="spacingAndGlyphs">0</text><text x="1110" y="880" font-size="22.500" textLength="28" lengthAdjust="spacingAndGlyphs">100</text></g>
        </svg>
      </article>
      <article class="card">
        <h2><span>Temprature _chart</span></h2>
        <svg width="423" height="240" viewBox="1208 656 423 240">
          <circle cx="1222.500" cy="672" r="3.500" fill="#0bf"/><text x="1233" y="676" class="tick dark" textLength="42">Temprture</text>
          <path d="M1244 756.500h369M1244 831.500h369M1258.500 697v178M1368.500 697v178M1479.500 697v178M1589.500 697v178" stroke="#eee"/>
          <path d="M1244 865.500h369" stroke="#ddd" stroke-width="2"/>
          <path d="M1249.500 831V791H1304l4-15h14l5-1.500h230l5.500 3h28l5.500-5.500h6v59z" fill="#d7f2fd" opacity=".7"/>
          <path d="M1249.500 791H1304l4-15h14l5-1.500h230l5.500 3h28l5.500-5.500h6" fill="none" stroke="#7fd8f8" stroke-width="1.800"/>
          <path d="M1244.500 697v169M1242 756.500h3M1242 831.500h3" stroke="#45c8f5"/>
          <g class="axis"><text x="1225" y="760" textLength="12.500" lengthAdjust="spacingAndGlyphs">50</text><text x="1232" y="835" textLength="6" lengthAdjust="spacingAndGlyphs">0</text></g>
          <g class="tick"><text x="1243" y="888.500" textLength="32">1:05 AM</text><text x="1352" y="888.500" textLength="33">1:10 AM</text><text x="1464" y="888.500" textLength="33">1:15 AM</text><text x="1573" y="888.500" textLength="33">1:20 AM</text></g>
        </svg>
      </article>
      <article class="card solid level-h">
        <h2><span>Temprature _</span></h2>
        <svg width="166" height="240" viewBox="1638 656 166 240"><svg x="1649" y="656" width="155" height="240" viewBox="1649 656 155 240"><g class="num white"><text x="1637" y="819" font-size="129" textLength="101" lengthAdjust="spacingAndGlyphs">40</text><text x="1743" y="771" font-size="66" textLength="50" lengthAdjust="spacingAndGlyphs">°C</text></g></svg></svg>
      </article>
    </div>
    <footer class="region"><span>Region: ny3</span><a>Privacy Policy</a></footer>
    <i class="scroll"></i>
  </main>
</section>
</body>
</html>
```

FILE: styles.css
```css
* { box-sizing: border-box; }
body { margin: 0; width: 1898px; height: 919px; overflow: hidden; display: flex; background: #fff; }
text { white-space: pre; }

/* schematic editor */
.capture { width: 762px; height: 919px; flex: none; display: flex; flex-direction: column; background: #e3eaf1; border-left: 1px solid #0078d7; border-right: 2px solid #0078d7; border-bottom: 1px solid #0078d7; font: 12px "Liberation Sans", sans-serif; color: #000; }
.tabstrip { height: 27px; display: flex; background: linear-gradient(#dbeaf4, #b5d4e9); flex: none; }
.tab { width: 178px; display: flex; align-items: center; padding-bottom: 11px; background: linear-gradient(#e9f2f8, #c9e0ef 60%, #b9d8eb); }
.tab-slash { margin-top: -1px; }
.tab-icon { margin: -2px 4px 0 2px; }
.tab-name { width: 107px; margin-right: 16px; font: 600 11.500px "Noto Sans", sans-serif; letter-spacing: -.05px; white-space: nowrap; color: #1d4360; }
.tab svg:last-child { margin-top: 2px; margin-left: -8px; }
.tab-rest { flex: 1; height: 21px; background: #e3eaf1; border-left: 1px solid #6aa3c8; border-bottom: 1px solid #6aa3c8; }
.workspace { height: 843px; display: flex; flex: none; background: #b4cfe2; }
.tools { width: 28px; background: #e3eaf1; }
.tool-group { height: 484px; padding-left: 2px; background: linear-gradient(90deg, #e6f2f9, #cfe4f1 60%, #a9cde3); border-bottom: 1px solid #9dbdd2; }
.tool-group.second { height: 127px; }
.tools i, .tools b { display: block; }
.grip { height: 11px; margin-left: -1px; background: radial-gradient(circle, #aab6c0 1px, transparent 1.500px) 0 1px / 4px 7px repeat-x; }
.second .grip { margin-top: 4px; height: 10px; }
.tool { width: 21px; height: 21px; }
.tool.on { outline: 1px solid #6aa3c8; outline-offset: -1px; background: #bcd8ea; }
.tool svg { display: block; width: 21px; height: 21px; fill: none; }
.lbl { font: 10px "Liberation Sans", sans-serif; fill: #0b55a8; }
.glyph-a { font: bold 19px "Liberation Serif", serif; fill: #333; }
.sep { height: 2px; margin: 0 2px 1px; background: #a4a9ad; border-bottom: 1px solid #fff; }
.angle { display: block; width: 24px; height: 15px; margin: 1px 0; padding-left: 2px; line-height: 14px; background: #fff; }
.side { width: 121px; display: flex; flex-direction: column; gap: 4px; }
.overview { height: 101px; background: #dedfd0; border: 1px solid #666; }
.overview svg { display: block; }
.devices { height: 738px; border: 1px solid #666; background: #fff; display: flex; flex-direction: column; }
.devices-head { height: 23px; display: flex; align-items: center; background: linear-gradient(#eaf4fa, #a9d0e8); padding-left: 2px; }
.key { width: 15px; height: 15px; border-radius: 3px; margin-right: 6px; background: #0f4fd8; color: #fff; text-align: center; line-height: 15px; font-size: 12px; }
.devices-head span { margin-left: 13px; letter-spacing: -1px; }
.devices ul { list-style: none; margin: 0; padding: 0; flex: 1; border: solid #0078d7; border-width: 0 1px; overflow: hidden; }
.devices li { height: 13px; line-height: 16px; padding-left: 2px; white-space: nowrap; letter-spacing: -.6px; }
.devices .picked { background: #0078d7; color: #fff; height: 14px; margin-bottom: -1px; }
.hscroll { height: 17px; background: #f0f0f0; border: 1px solid #0078d7; border-top: 0; padding: 7px 17px; }
.hscroll i { display: block; width: 72px; height: 2px; background: #8a8a8a; }
.sheet { width: 602px; height: 842px; margin-left: 4px; background: #dedfd0; border: 1px solid #666; }
.schematic { display: block; }
.schematic text { font-family: "Liberation Sans", sans-serif; }
.schematic .vert-name { font-size: 10px; font-weight: bold; fill: #fff; }
.silk text { font-size: 6px; font-weight: bold; fill: #fff; text-anchor: end; }
.schematic .pin, .pin text { font-size: 7px; fill: #404040; }
.schematic .part, .part text { font-size: 7px; fill: #303030; }
.schematic .red { fill: #b03030; }
.schematic .dim { fill: #808070; }
.schematic .ref { font-size: 10px; fill: #202020; }
.schematic .val { font-size: 7px; fill: #303030; }
.schematic .led { font-size: 7px; font-weight: bold; fill: #0c0; }
.schematic .site { font-size: 7px; font-weight: bold; fill: #111; }
.schematic .white-lbl { font-size: 6.500px; font-weight: bold; fill: #fff; }
.schematic .sm { font-size: 5.800px; }
.schematic .lcd-text { font: 14.500px "DejaVu Sans Mono", monospace; fill: #000; }
.simbar { height: 27px; display: flex; gap: 4px; padding: 1px 0; flex: none; }
.controls, .anim { display: flex; align-items: center; background: linear-gradient(#e4f1f9, #cfe5f2 50%, #aed1e6); }
.controls { width: 339px; border-right: 1px solid #8fb4cc; }
.anim { flex: 1; color: #004000; }
.anim span { margin-left: 3px; letter-spacing: -.68px; white-space: nowrap; }
.vgrip { width: 3px; height: 20px; margin-left: 3px; margin-right: 4px; background: radial-gradient(circle, #9aa6b0 1px, transparent 1.500px) 0 0 / 3px 4px repeat-y; }
.controls .vgrip { margin-right: 13px; }
.controls svg { flex: none; }
.controls svg + svg { margin-left: 2px; }
.messages { margin-left: 44px; letter-spacing: -.55px; white-space: nowrap; }
.coords { flex: 1; display: flex; align-items: center; background: linear-gradient(#e4f1f9, #aed1e6); letter-spacing: -.4px; }
.cx { width: 23px; margin-left: 4px; } .cv { width: 45px; } .cy { width: 27px; } .cv2 { flex: 1; } .unit { color: #1c4aa0; width: 11px; }

/* device dashboard */
.dash { flex: 1; display: flex; height: 919px; border-bottom: 1px solid #777; font: 14px "Noto Sans", sans-serif; color: #5a5a5f; overflow: hidden; }
.rail { width: 58px; flex: none; display: flex; flex-direction: column; align-items: center; padding: 6px 1px 0 0; box-shadow: 2px 0 10px rgba(0,0,0,.1); z-index: 1; background: #fff; }
.logo { width: 43px; height: 43px; margin-bottom: 11px; border-radius: 12px; background: #23c48e; color: #fff; font: bold 27px/43px Inter, sans-serif; text-align: center; flex: none; }
.rail-item { width: 58px; height: 57.500px; display: flex; align-items: center; justify-content: center; flex: none; }
.rail-item.active { background: #23c48e; margin-right: -1px; }
.rail-item svg { width: 19px; height: 19px; fill: none; stroke: #2b2b30; stroke-width: 1.200; }
.rail-gap { flex: 1; }
.rail-item:last-child { margin-bottom: 1px; }
.page { flex: 1; position: relative; padding-left: 44px; background: #fefefe; min-width: 0; }
.page-tools { display: flex; gap: 12px; align-items: center; margin-left: -27px; padding-top: 19px; height: 37px; }
.device { display: flex; gap: 14px; margin: 15px 0 0 1px; height: 86px; }
.thumb { width: 86px; height: 86px; border: 1px solid #eaeaea; border-radius: 4px; display: flex; align-items: center; justify-content: center; padding: 0 2px 2px 0; flex: none; }
.device-info { width: 700px; }
.name-row { display: flex; align-items: center; height: 31px; }
h1 { margin: -3px 0 0; width: 241px; font: 700 21px Inter, sans-serif; letter-spacing: .4px; color: #26262c; white-space: nowrap; }
.online { width: 47px; height: 22px; margin-top: -1px; border: 1px solid #bfe6b4; border-radius: 3px; background: #d5f1cb; color: #24451c; font-size: 12px; line-height: 20px; text-align: center; }
.more { width: 28px; height: 29px; margin: 0 0 0 15px; padding: 0 0 3px; border: 1px solid #d5d5d8; border-radius: 4px; background: #fff; display: flex; align-items: center; justify-content: center; }
.owner-row { display: flex; align-items: center; height: 27px; margin-top: -1px; font-size: 15px; font-weight: 300; color: #7890e4; white-space: nowrap; }
.owner-row svg { fill: none; stroke: #7890e4; stroke-width: 1.300; }
.owner { margin-left: 7px; width: 46px; letter-spacing: -.9px; } .org { margin-left: 7px; letter-spacing: -.55px; }
.add-tag { display: flex; align-items: center; gap: 3px; height: 22px; width: 77px; margin-top: 7px; padding: 0 8px; border: 1px dashed #ccc; border-radius: 4px; background: #fff; color: #444; font: 12px "Noto Sans", sans-serif; white-space: nowrap; letter-spacing: -.2px; }
.add-tag svg { flex: none; }
.tabs { height: 58px; display: flex; align-items: flex-end; font-size: 16px; font-weight: 300; border-bottom: 1px solid #eaeaea; margin-left: -44px; padding-left: 45px; white-space: nowrap; letter-spacing: -.4px; }
.tabs a { height: 32px; margin-bottom: -1px; }
.tabs .current { color: #1c1c20; border-bottom: 2px solid #23c48e; letter-spacing: -.5px; }
.t1 { width: 75px; margin-right: 29px; } .t2 { width: 62px; margin-right: 29px; } .t3 { width: 80px; margin-right: 29px; } .t4 { width: 68px; margin-right: 29px; }
.ranges { width: 924px; height: 29px; margin: 15px 0 0 1px; display: grid; grid-template-columns: repeat(8, minmax(0, 1fr)); border: 1px solid #d3d3d6; border-radius: 4px; font: 500 13px Inter, sans-serif; overflow: hidden; }
.ranges span { display: flex; align-items: center; justify-content: center; border-left: 1px solid #d3d3d6; padding-right: 2px; }
.ranges .live { background: #23c48e; color: #000; font-weight: 600; border: 0; padding: 0; }
.ranges .locked { background: #fafafa; color: #8c8c90; gap: 7px; font-weight: 400; }
.ranges .shift { padding-right: 9px; }
.locked i { width: 23px; height: 23px; border-radius: 50%; background: linear-gradient(90deg, #d4395f, #f9b233); display: flex; align-items: center; justify-content: center; box-shadow: 0 1px 4px rgba(230,125,74,.3); }
.grid { display: grid; grid-template-columns: 337px 423px 165px; grid-template-rows: 274px 274px; gap: 101px 7px; margin-top: 6px; }
.card { position: relative; background: #fff; border-radius: 4px; box-shadow: 0 0 9px rgba(0,0,0,.09); }
.card > svg { display: block; }
h2 { margin: 0; height: 34px; padding: 11px 13px 0 11px; font-size: 16px; font-weight: 300; letter-spacing: -.25px; display: flex; align-items: center; justify-content: space-between; color: #4e4e53; white-space: nowrap; }
h2 svg { margin-top: -3px; }
.num text { font-family: Roboto, sans-serif; font-weight: 100; fill: #4c4c52; stroke: #4c4c52; stroke-width: .35px; }
.num.white text { fill: #fff; stroke: #fff; stroke-width: 1.600px; }
.axis text { font: 300 12px "Noto Sans", sans-serif; fill: #4e4e53; }
.tick text, .tick { font: 9px "Noto Sans", sans-serif; fill: #4e4e53; }
.tick.dark { fill: #222; }
.tip { position: absolute; left: 112px; top: 74px; width: 133px; height: 83px; padding: 15px 14px 16px; background: #fff; border-radius: 4px; box-shadow: 0 0 9px rgba(0,0,0,.13); font-size: 13px; font-weight: 300; display: flex; flex-direction: column; justify-content: space-between; white-space: nowrap; letter-spacing: -.15px; color: #333; }
.tip-row { display: flex; align-items: center; gap: 7px; }
.tip-row i { width: 11px; height: 11px; border-radius: 50%; background: #0a6ddb; }
.solid { background-color: #3558d8; overflow: hidden; }
.solid h2 { color: #fff; letter-spacing: -.15px; }
.level-v { background-image: linear-gradient(#304fbe 148px, #017fc5 148px); background-size: 8px 100%; background-repeat: no-repeat; }
.level-h { background-image: linear-gradient(90deg, #017fc5 66px, #304fbe 66px); background-size: 100% 7px; background-position: bottom; background-repeat: no-repeat; }
.region { position: absolute; right: 0; bottom: 0; width: 139.500px; height: 34px; padding: 8px 0 0 13px; background: rgba(255,255,255,.82); font-size: 11.500px; line-height: 17px; display: flex; gap: 8px; white-space: nowrap; color: #222; letter-spacing: -.5px; overflow: hidden; }
.region a { color: #8f9fe0; }
.scroll { position: absolute; right: 0; top: 255px; width: 1px; height: 605px; background: #ccc; }
```
